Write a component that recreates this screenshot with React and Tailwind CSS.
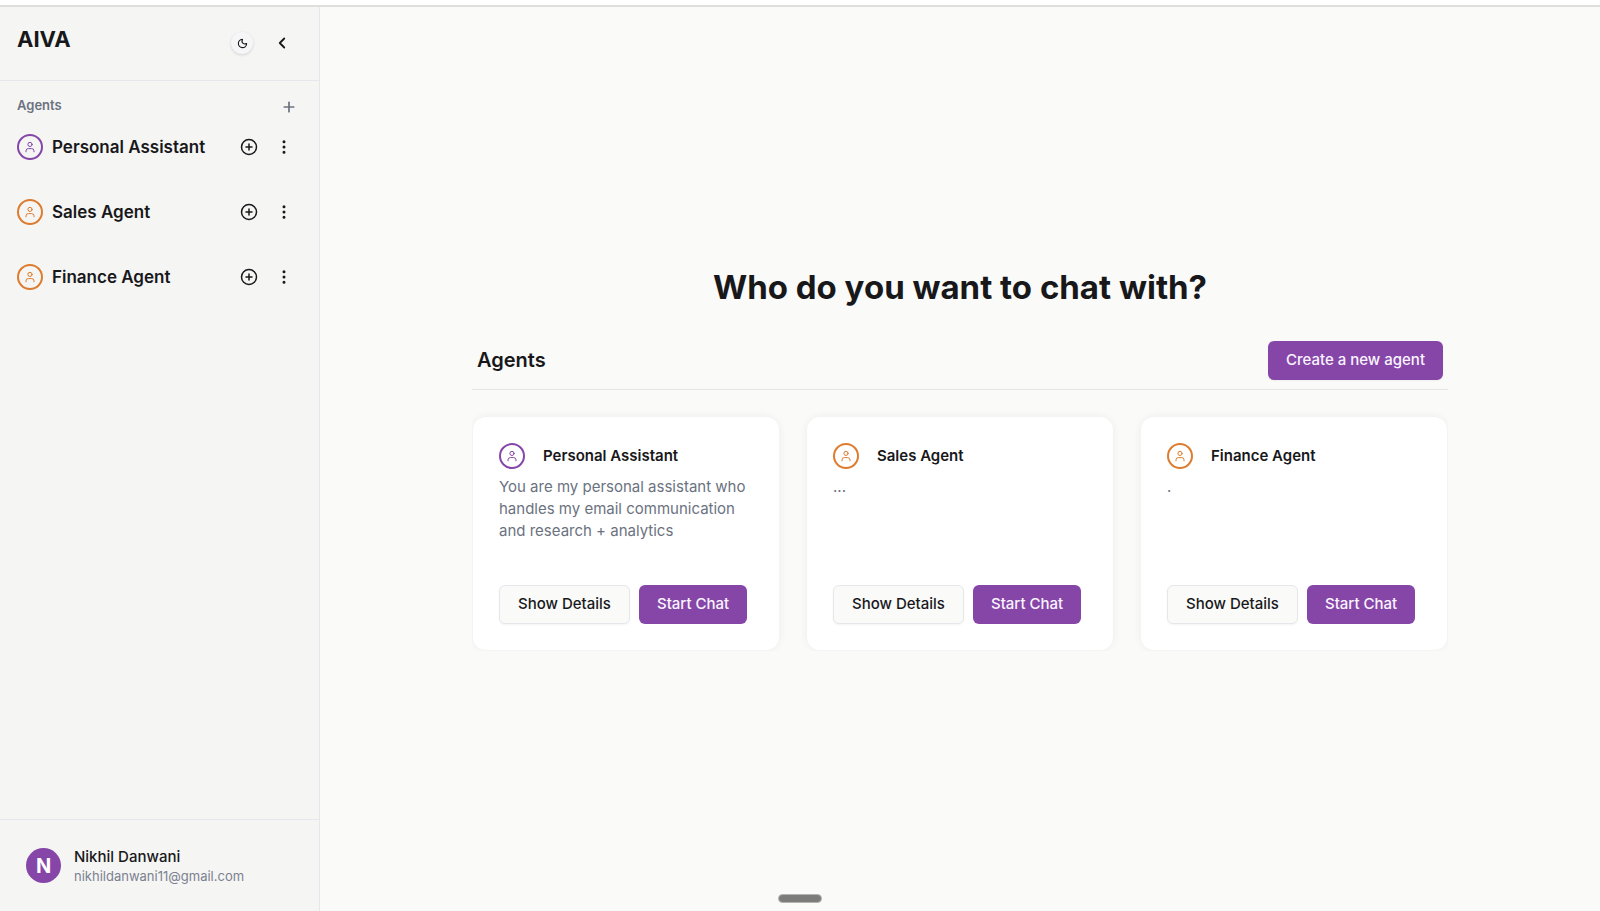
import { ChevronLeft, CirclePlus, EllipsisVertical, Moon, Plus } from 'lucide-react'
import clsx from 'clsx'

const agents = [
  {
    name: 'Personal Assistant',
    description: 'You are my personal assistant who handles my email communication and research + analytics',
    color: 'purple',
  },
  { name: 'Sales Agent', description: '...', color: 'orange' },
  { name: 'Finance Agent', description: '.', color: 'orange' },
]

const AgentAvatar = ({ color }) => (
  <span
    className={clsx(
      'flex size-[26px] shrink-0 items-center justify-center rounded-full border-2',
      color === 'purple' ? 'border-[#8646a8] text-[#8646a8]' : 'border-[#dd7c2e] text-[#dd7c2e]'
    )}
  >
    <svg viewBox="0 0 12 12" className="size-3" fill="none" stroke="currentColor" strokeLinecap="round" strokeLinejoin="round">
      <circle cx="6" cy="3.4" r="2.1" />
      <path d="M2 10.8V9.9a2.3 2.3 0 0 1 2.3-2.3h3.4A2.3 2.3 0 0 1 10 9.9v.9" />
    </svg>
  </span>
)

const SidebarAgent = ({ agent }) => (
  <li className="flex h-[65px] items-start">
    <div className="flex w-full items-center pr-[5px]">
      <AgentAvatar color={agent.color} />
      <span className="ml-[9px] flex-1 text-[17px] leading-[26px] font-semibold">{agent.name}</span>
      <button aria-label={`New chat with ${agent.name}`} className="p-1">
        <CirclePlus className="size-[18px]" />
      </button>
      <button aria-label={`${agent.name} options`} className="ml-[9px] p-1">
        <EllipsisVertical className="size-[18px]" />
      </button>
    </div>
  </li>
)

const Sidebar = () => (
  <aside className="flex w-80 shrink-0 flex-col border-r border-[#e6e7eb] bg-[#f5f5f4]">
    <div className="flex h-[74px] items-start border-b border-[#e6e7eb] px-[17px] pt-4">
      <h2 className="flex-1 text-[22px] leading-8 font-bold">AIVA</h2>
      <button
        aria-label="Toggle theme"
        className="mt-[9px] flex size-[22px] items-center justify-center rounded-full bg-[#f6f6f9] shadow-[0_1px_3px_rgba(0,0,0,0.15)]"
      >
        <Moon className="size-[11px]" strokeWidth={2.4} />
      </button>
      <button aria-label="Collapse sidebar" className="mt-[11px] mr-[11px] ml-5 flex size-[18px] items-center justify-center">
        <ChevronLeft className="size-[18px]" strokeWidth={2.4} />
      </button>
    </div>

    <div className="flex-1 px-[17px] pt-[14px]">
      <div className="mb-[15px] flex items-start justify-between pr-[5px] text-[#6b7280]">
        <h3 className="text-[13px] leading-5 font-semibold">Agents</h3>
        <button aria-label="Add agent" className="flex h-6 items-center">
          <Plus className="size-4" strokeWidth={2.6} />
        </button>
      </div>
      <ul>
        {agents.map((agent) => (
          <SidebarAgent key={agent.name} agent={agent} />
        ))}
      </ul>
    </div>

    <div className="flex h-[92px] items-center gap-[13px] border-t border-[#e6e7eb] px-[26px]">
      <div className="flex size-[35px] items-center justify-center rounded-full bg-[#8646a8] text-[20px] font-bold text-white">
        N
      </div>
      <div>
        <p className="text-[15px] leading-5 font-medium">Nikhil Danwani</p>
        <p className="text-[13px] leading-[18px] text-[#7b8190]">nikhildanwani11@gmail.com</p>
      </div>
    </div>
  </aside>
)

const AgentCard = ({ agent }) => (
  <article className="flex h-[233px] flex-col rounded-[13px] bg-white p-[26px] shadow-[0_0_8px_rgba(0,0,0,0.06)]">
    <div className="flex items-center gap-[18px]">
      <AgentAvatar color={agent.color} />
      <h3 className="text-[15px] leading-[26px] font-semibold">{agent.name}</h3>
    </div>
    <p className="mt-[7px] text-[15px] leading-[22px] text-[#6b7280]">{agent.description}</p>
    <div className="mt-auto flex gap-[9px]">
      <button className="h-[39px] rounded-md border border-[#e6e7eb] bg-[#fafaf9] px-[18px] text-[15px] font-medium shadow-xs">
        Show Details
      </button>
      <button className="h-[39px] rounded-md bg-[#8646a8] px-[18px] text-[15px] font-medium text-[#faf5ff]">
        Start Chat
      </button>
    </div>
  </article>
)

export default function App() {
  return (
    <div className="flex h-screen flex-col bg-white font-['Inter',sans-serif] text-[#18181b]">
      <div className="h-[7px] shrink-0 border-b-2 border-[#dededc]" />
      <div className="relative flex min-h-0 flex-1">
        <Sidebar />
        <main className="flex flex-1 flex-col items-center justify-center bg-[#fafaf9] px-8">
          <h1 className="text-[33px] leading-[38px] font-bold">Who do you want to chat with?</h1>
          <section className="mt-[35px] w-full max-w-[976px]">
            <div className="flex items-center justify-between border-b border-[#e6e7eb] px-[5px] pb-[9px]">
              <h2 className="text-[20px] leading-7 font-semibold">Agents</h2>
              <button className="h-[39px] rounded-md bg-[#8646a8] px-[18px] text-[15px] font-medium text-[#faf5ff] shadow-xs">
                Create a new agent
              </button>
            </div>
            <div className="mt-[14px] grid grid-cols-3 gap-7 overflow-hidden px-px pt-[13px] pb-px">
              {agents.map((agent) => (
                <AgentCard key={agent.name} agent={agent} />
              ))}
            </div>
          </section>
        </main>
        <div className="absolute bottom-2 left-1/2 h-[9px] w-[44px] -translate-x-1/2 rounded-full border border-[#b5b5b5] bg-[#7c7d7b]" />
      </div>
    </div>
  )
}
